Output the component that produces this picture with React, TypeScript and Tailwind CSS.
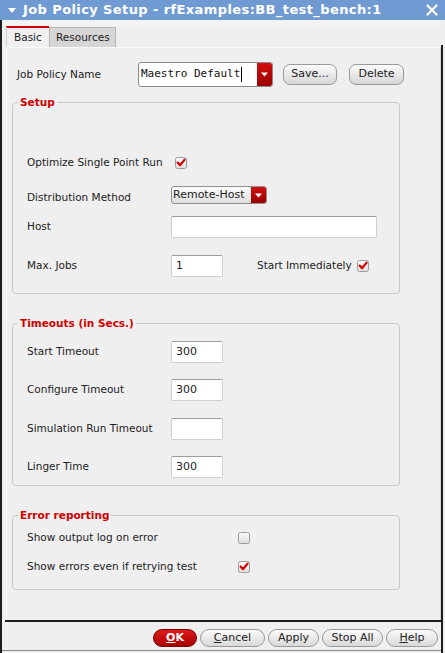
import React from "react";

function Check({ on }: { on: boolean }) {
  return (
    <svg width="12" height="12" viewBox="0 0 12 12" className="block">
      <defs>
        <linearGradient id="cbg" x1="0" y1="0" x2="0" y2="1">
          <stop offset="0" stopColor="#fdfdfd" />
          <stop offset="1" stopColor="#dcdcdc" />
        </linearGradient>
      </defs>
      <rect x="0.5" y="0.5" width="11" height="11" rx="2" fill="url(#cbg)" stroke="#9c9c9c" />
      {on && <path d="M2.6 5.6 L5 8.2 L9.6 2.6" fill="none" stroke="#d40000" strokeWidth="2.2" strokeLinecap="round" strokeLinejoin="round" />}
    </svg>
  );
}

function Field({ value = "", w = "w-[52px]" }: { value?: string; w?: string }) {
  return (
    <div className={`${w} h-[22px] bg-white border border-[#cfcfcf] border-t-[#9d9d9d] rounded-[2px] flex items-center pl-[4px] text-[11px]`}>
      {value}
    </div>
  );
}

function Btn({ children, w }: { children: React.ReactNode; w: string }) {
  return (
    <div className={`${w} h-[18px] rounded-[9px] border border-[#9a9a9a] bg-gradient-to-b from-[#fbfbfb] to-[#d9d9d9] flex items-center justify-center text-[11px] text-[#222]`}>
      {children}
    </div>
  );
}

function Group({ title, children, className }: { title: string; children: React.ReactNode; className: string }) {
  return (
    <fieldset className={`ml-[5px] w-[388px] border border-[#c9c9c9] rounded-[4px] ${className}`}>
      <legend className="ml-[5px] px-[2px] leading-[12px] text-[10.5px] font-bold text-[#d10000]">{title}</legend>
      <div className="pl-[14px]">{children}</div>
    </fieldset>
  );
}

export default function App() {
  return (
    <div className="w-[445px] h-[653px] bg-[#efefef] flex flex-col overflow-hidden font-['DejaVu_Sans',sans-serif] text-[10.5px] text-[#222]">
      <div className="h-[20px] bg-[#6f9bd2] flex items-center text-white shrink-0">
        <svg width="10" height="8" viewBox="0 0 10 8" className="ml-[7px] mr-[6px]">
          <path d="M1 2 L9 2 L5 7 Z" fill="white" />
        </svg>
        <span className="font-bold text-[13px] tracking-[0.4px]">Job Policy Setup - rfExamples:BB_test_bench:1</span>
        <svg width="12" height="12" viewBox="0 0 12 12" className="ml-auto mr-[7px]">
          <path d="M1.5 1.5 L10.5 10.5 M10.5 1.5 L1.5 10.5" stroke="white" strokeWidth="2.2" strokeLinecap="round" />
        </svg>
      </div>

      <div className="flex-1 flex flex-row border-l-2 border-[#1e1e1e]">
        <div className="w-[439px] flex flex-col">
          <div className="h-[6px] bg-[#f3f3f3]" />
          <div className="h-[21px] flex items-end pl-[4px]">
            <div className="w-[43px] h-[21px] border-t-2 border-[#d40000] border-l border-l-[#d0d0d0] bg-[#f0f0f0] flex items-center pl-[7px]">Basic</div>
            <div className="w-[67px] h-[20px] border border-b-0 border-[#b4b4b4] bg-[#d6d6d6] flex items-center pl-[6px]">Resources</div>
          </div>

          <div className="ml-[4px] h-[573px] border-t border-l border-[#fafafa] border-r border-r-[#d4d4d4] flex flex-col">
            <div className="mt-[14px] flex items-center pl-[10px] h-[25px]">
              <span className="w-[121px]">Job Policy Name</span>
              <div className="w-[135px] h-[25px] bg-white border border-[#8a8a8a] rounded-[3px] flex overflow-hidden">
                <div className="flex-1 flex items-center pl-[2px] font-['DejaVu_Sans_Mono',monospace] text-[11px] text-[#111]">
                  Maestro Default<span className="w-[1px] h-[15px] bg-black ml-[1px]" />
                </div>
                <div className="w-[15px] bg-gradient-to-b from-[#d31010] to-[#9a0000] flex items-center justify-center">
                  <svg width="7" height="5" viewBox="0 0 7 5"><path d="M0 0.5 L7 0.5 L3.5 4.5 Z" fill="white" /></svg>
                </div>
              </div>
              <div className="ml-[10px] w-[54px] h-[21px] rounded-[7px] border border-[#9a9a9a] bg-gradient-to-b from-[#fbfbfb] to-[#d6d6d6] flex items-center justify-center text-[11px]">Save...</div>
              <div className="ml-[12px] w-[55px] h-[21px] rounded-[7px] border border-[#9a9a9a] bg-gradient-to-b from-[#fbfbfb] to-[#d6d6d6] flex items-center justify-center text-[11px]">Delete</div>
            </div>

            <Group title="Setup" className="mt-[9px] pb-[16px]">
              <div className="mt-[45px] h-[20px] flex items-center">
                <span className="w-[148px]">Optimize Single Point Run</span>
                <Check on />
              </div>
              <div className="mt-[13px] h-[18px] flex items-center">
                <span className="w-[144px] mt-[6px]">Distribution Method</span>
                <div className="w-[96px] h-[18px] rounded-[3px] border border-[#8f8f8f] bg-gradient-to-b from-[#fdfdfd] to-[#dedede] flex overflow-hidden">
                  <span className="flex-1 flex items-center pl-[1px] text-[11px]">Remote-Host</span>
                  <div className="w-[15px] bg-gradient-to-b from-[#d31010] to-[#9a0000] flex items-center justify-center">
                    <svg width="7" height="5" viewBox="0 0 7 5"><path d="M0 0.5 L7 0.5 L3.5 4.5 Z" fill="white" /></svg>
                  </div>
                </div>
              </div>
              <div className="mt-[12px] h-[22px] flex items-center">
                <span className="w-[144px]">Host</span>
                <Field w="w-[206px]" />
              </div>
              <div className="mt-[17px] h-[22px] flex items-center">
                <span className="w-[144px]">Max. Jobs</span>
                <Field value="1" />
                <span className="ml-[34px] w-[100px]">Start Immediately</span>
                <Check on />
              </div>
            </Group>

            <Group title="Timeouts (in Secs.)" className="mt-[23px] pb-[7px]">
              <div className="mt-[12px] h-[22px] flex items-center">
                <span className="w-[144px]">Start Timeout</span>
                <Field value="300" />
              </div>
              <div className="mt-[16px] h-[22px] flex items-center">
                <span className="w-[144px]">Configure Timeout</span>
                <Field value="300" />
              </div>
              <div className="mt-[17px] h-[22px] flex items-center">
                <span className="w-[144px]">Simulation Run Timeout</span>
                <Field />
              </div>
              <div className="mt-[16px] h-[22px] flex items-center">
                <span className="w-[144px]">Linger Time</span>
                <Field value="300" />
              </div>
            </Group>

            <Group title="Error reporting" className="mt-[23px] pb-[12px]">
              <div className="mt-[7px] h-[20px] flex items-center">
                <span className="w-[211px]">Show output log on error</span>
                <Check on={false} />
              </div>
              <div className="mt-[9px] h-[20px] flex items-center">
                <span className="w-[211px]">Show errors even if retrying test</span>
                <Check on />
              </div>
            </Group>
          </div>

          <div className="ml-[3px] h-[2px] bg-[#1e1e1e]" />
          <div className="h-[28px] pt-[7px] pr-[3px] flex justify-end gap-[3px]">
            <div className="w-[44px] h-[18px] rounded-[9px] border border-[#7a0000] bg-gradient-to-b from-[#e01a1a] to-[#a80000] flex items-center justify-center text-[11px] font-bold text-white">
              <span className="underline">O</span>K
            </div>
            <Btn w="w-[65px]"><span className="underline">C</span>ancel</Btn>
            <Btn w="w-[51px]">Apply</Btn>
            <Btn w="w-[61px]">Stop All</Btn>
            <Btn w="w-[52px]"><span className="underline">H</span>elp</Btn>
          </div>
          <div className="h-[1px] bg-[#8a8a8a]" />
        </div>
        <div className="w-[2px] flex flex-col">
          <div className="h-[25px]" />
          <div className="flex-1 bg-[#1e1e1e]" />
        </div>
      </div>
    </div>
  );
}
